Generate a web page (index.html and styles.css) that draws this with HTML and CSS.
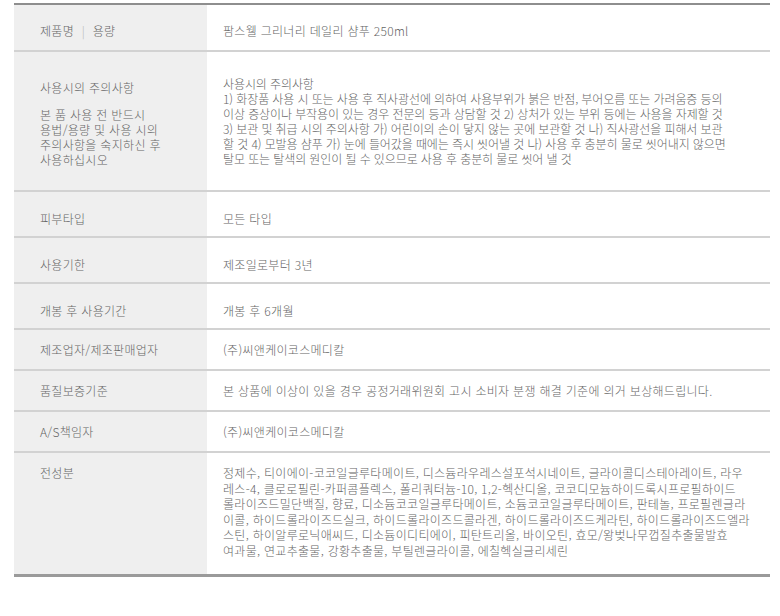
FILE: index.html
```html
<!DOCTYPE html>
<html lang="ko">
<head>
  <meta charset="UTF-8">
  <meta name="viewport" content="width=device-width, initial-scale=1">
  <title>제품 정보 고시</title>
  <link rel="stylesheet" href="styles.css">
</head>
<body>

  <table class="info-table">
    <tr class="row-first">
      <th>제품명 <span class="sep">|</span> 용량</th>
      <td>팜스웰 그리너리 데일리 샴푸 250ml</td>
    </tr>
    <tr class="row-notice">
      <th>
        <p class="label-main">사용시의 주의사항</p>
        <p class="label-sub">본 품 사용 전 반드시<br>용법/용량 및 사용 시의<br>주의사항을 숙지하신 후<br>사용하십시오</p>
      </th>
      <td>
        사용시의 주의사항<br>
        1) 화장품 사용 시 또는 사용 후 직사광선에 의하여 사용부위가 붉은 반점, 부어오름 또는 가려움증 등의<br>
        이상 증상이나 부작용이 있는 경우 전문의 등과 상담할 것 2) 상처가 있는 부위 등에는 사용을 자제할 것<br>
        3) 보관 및 취급 시의 주의사항 가) 어린이의 손이 닿지 않는 곳에 보관할 것 나) 직사광선을 피해서 보관<br>
        할 것 4) 모발용 샴푸 가) 눈에 들어갔을 때에는 즉시 씻어낼 것 나) 사용 후 충분히 물로 씻어내지 않으면<br>
        탈모 또는 탈색의 원인이 될 수 있으므로 사용 후 충분히 물로 씻어 낼 것
      </td>
    </tr>
    <tr class="row-tall">
      <th>피부타입</th>
      <td>모든 타입</td>
    </tr>
    <tr class="row-tall">
      <th>사용기한</th>
      <td>제조일로부터 3년</td>
    </tr>
    <tr class="row-tall">
      <th>개봉 후 사용기간</th>
      <td>개봉 후 6개월</td>
    </tr>
    <tr>
      <th>제조업자/제조판매업자</th>
      <td>(주)씨앤케이코스메디칼</td>
    </tr>
    <tr>
      <th>품질보증기준</th>
      <td>본 상품에 이상이 있을 경우 공정거래위원회 고시 소비자 분쟁 해결 기준에 의거 보상해드립니다.</td>
    </tr>
    <tr>
      <th>A/S책임자</th>
      <td>(주)씨앤케이코스메디칼</td>
    </tr>
    <tr class="row-ingredients">
      <th>전성분</th>
      <td>
        정제수, 티이에이-코코일글루타메이트, 디스듐라우레스설포석시네이트, 글라이콜디스테아레이트, 라우<br>
        레스-4, 클로로필린-카퍼콤플렉스, 폴리쿼터늄-10, 1,2-헥산디올, 코코디모늄하이드록시프로필하이드<br>
        롤라이즈드밀단백질, 향료, 디소듐코코일글루타메이트, 소듐코코일글루타메이트, 판테놀, 프로필렌글라<br>
        이콜, 하이드롤라이즈드실크, 하이드롤라이즈드콜라겐, 하이드롤라이즈드케라틴, 하이드롤라이즈드엘라<br>
        스틴, 하이알루로닉애씨드, 디소듐이디티에이, 피탄트리올, 바이오틴, 효모/왕벚나무껍질추출물발효<br>
        여과물, 연교추출물, 강황추출물, 부틸렌글라이콜, 에칠헥실글리세린
      </td>
    </tr>
  </table>

</body>
</html>
```

FILE: styles.css
```css
:root {
  --text-color: #666;
  --label-bg: #efefef;
  --line-color: #d2d2d2;
  --edge-color: #8e8e8e;
}

* {
  box-sizing: border-box;
  margin: 0;
  padding: 0;
}

body {
  background: #fff;
  color: var(--text-color);
  font-family: "Noto Sans CJK KR", "Noto Sans", sans-serif;
  font-size: 12px;
  font-weight: 300;
}

.info-table {
  width: 756px;
  margin: 3px 10px 0 14px;
  border-collapse: collapse;
  border-top: 2px solid var(--edge-color);
  border-bottom: 3px solid #9a9a9a;
  letter-spacing: 0.3px;
  line-height: 15px;
}

.info-table tr {
  border-bottom: 2px solid var(--line-color);
}

.info-table tr:last-child {
  border-bottom: none;
}

.info-table th,
.info-table td {
  text-align: left;
  font-weight: 300;
  vertical-align: middle;
  padding: 12px 0;
  white-space: nowrap;
}

.info-table th {
  width: 193px;
  background: var(--label-bg);
  padding-left: 26px;
}

.info-table td {
  padding-left: 16px;
}

.sep {
  color: #b5b5b5;
  margin: 0 4px;
}

.row-first th,
.row-first td {
  padding-top: 18px;
  padding-bottom: 12px;
}

.row-tall th,
.row-tall td {
  padding-top: 19px;
  padding-bottom: 10px;
}

.row-notice th,
.row-notice td {
  vertical-align: top;
}

.row-notice th {
  padding-top: 28px;
  padding-bottom: 0;
}

.row-notice td {
  padding-top: 24px;
  padding-bottom: 24px;
  letter-spacing: -0.1px;
}

.label-main {
  margin-bottom: 12px;
}

.row-ingredients th,
.row-ingredients td {
  vertical-align: top;
  padding-top: 12px;
  padding-bottom: 16px;
  line-height: 15.5px;
}
```
